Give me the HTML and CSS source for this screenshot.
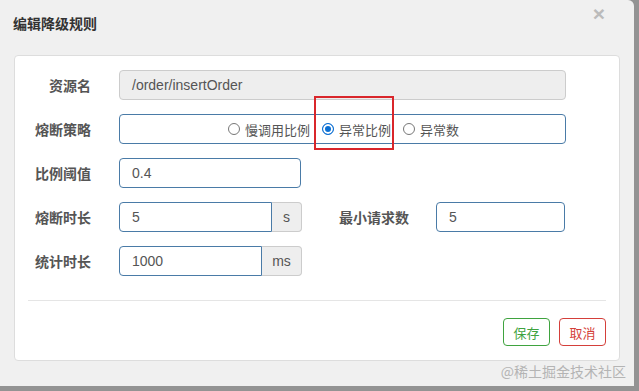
FILE: index.html
```html
<!DOCTYPE html>
<html>

<head>
    <meta charset="UTF-8">
    <meta name="viewport" content="width=device-width, initial-scale=1.0">
    <link rel="stylesheet" href="styles.css">
</head>

<body>
    <div class="modal">
        <div class="modal-header">
            <h4 class="modal-title">编辑降级规则</h4>
            <span class="close">&times;</span>
        </div>
        <div class="modal-body">
            <div class="form-row">
                <label class="label">资源名</label>
                <div class="input disabled wide">/order/insertOrder</div>
            </div>
            <div class="form-row">
                <label class="label">熔断策略</label>
                <div class="input wide radios">
                    <span class="option"><span class="radio"></span>慢调用比例</span>
                    <span class="option marked"><span class="radio checked"></span>异常比例</span>
                    <span class="option"><span class="radio"></span>异常数</span>
                </div>
            </div>
            <div class="form-row">
                <label class="label">比例阈值</label>
                <div class="input w182">0.4</div>
            </div>
            <div class="form-row">
                <label class="label">熔断时长</label>
                <div class="group">
                    <div class="input w153 left">5</div>
                    <span class="addon w30">s</span>
                </div>
                <label class="label label-b">最小请求数</label>
                <div class="input w129">5</div>
            </div>
            <div class="form-row">
                <label class="label">统计时长</label>
                <div class="group">
                    <div class="input w143 left">1000</div>
                    <span class="addon w40">ms</span>
                </div>
            </div>
            <div class="divider"></div>
            <div class="footer">
                <button class="btn btn-save">保存</button>
                <button class="btn btn-cancel">取消</button>
            </div>
        </div>
        <div class="watermark">@稀土掘金技术社区</div>
    </div>
</body>

</html>
```

FILE: styles.css
```css
body {
    margin: 0;
    background-color: #939393;
    font-family: "Liberation Sans", Arial, "Noto Sans CJK SC", sans-serif;
    color: #555;
}

.modal {
    width: 634px;
    height: 386px;
    background-color: #f0f0f0;
    border-top-right-radius: 6px;
    position: relative;
}

.modal-header {
    height: 55px;
    display: flex;
    align-items: flex-start;
    justify-content: space-between;
}

.modal-title {
    margin: 14px 0 0 13px;
    font-size: 14px;
    font-weight: bold;
    color: #333;
    line-height: 20px;
}

.close {
    margin: 2px 29px 0 0;
    font-size: 21px;
    font-weight: bold;
    color: #bbb;
    line-height: 24px;
}

.modal-body {
    box-sizing: border-box;
    margin-left: 14px;
    width: 606px;
    height: 306px;
    padding-top: 14px;
    background-color: #fff;
    border: 1px solid #ddd;
    border-radius: 4px;
}

.form-row {
    display: flex;
    align-items: center;
    height: 30px;
    margin-bottom: 14px;
}

.label {
    width: 76px;
    margin-right: 28px;
    text-align: right;
    font-size: 14px;
    font-weight: bold;
    color: #555;
}

.label-b {
    width: auto;
    margin-left: 37px;
    margin-right: 27px;
}

.input {
    box-sizing: border-box;
    height: 30px;
    padding: 0 12px;
    display: flex;
    align-items: center;
    font-size: 14px;
    color: #555;
    border: 1px solid #4a7ba7;
    border-radius: 4px;
    background-color: #fff;
}

.input.disabled {
    background-color: #eee;
    border-color: #ccc;
}

.wide { width: 447px; }
.w182 { width: 182px; }
.w153 { width: 153px; }
.w143 { width: 143px; }
.w129 { width: 129px; }

.group {
    display: flex;
}

.input.left {
    border-top-right-radius: 0;
    border-bottom-right-radius: 0;
}

.addon {
    box-sizing: border-box;
    height: 30px;
    display: flex;
    align-items: center;
    justify-content: center;
    font-size: 14px;
    color: #555;
    background-color: #eee;
    border: 1px solid #ccc;
    border-left: none;
    border-radius: 0 4px 4px 0;
}

.w30 { width: 30px; }
.w40 { width: 40px; }

.radios {
    justify-content: center;
    gap: 12px;
    padding-left: 14px;
}

.option {
    display: flex;
    align-items: center;
    font-size: 13px;
    color: #555;
    position: relative;
}

.radio {
    box-sizing: border-box;
    width: 12px;
    height: 12px;
    margin-right: 5px;
    border: 1px solid #777;
    border-radius: 50%;
}

.radio.checked {
    border-color: #0b6fd3;
    background-color: #0b6fd3;
    box-shadow: inset 0 0 0 2px #fff;
}

/* red annotation box */
.marked::after {
    content: "";
    position: absolute;
    left: -8px;
    top: -24px;
    width: 76px;
    height: 50px;
    border: 2px solid #d9262b;
}

.divider {
    margin: 24px 13px 0 13px;
    border-top: 1px solid #e5e5e5;
}

.footer {
    display: flex;
    justify-content: flex-end;
    gap: 9px;
    margin: 17px 13px 0 0;
}

.btn {
    width: 47px;
    height: 28px;
    padding: 0;
    font-family: inherit;
    font-size: 13px;
    background-color: #fff;
    border-radius: 4px;
}

.btn-save {
    color: #3fa33f;
    border: 1px solid #3fa33f;
}

.btn-cancel {
    color: #d43f3a;
    border: 1px solid #d43f3a;
}

.watermark {
    position: absolute;
    right: 8px;
    bottom: 5px;
    font-size: 14px;
    color: #b4b4b4;
    font-family: "Noto Sans CJK SC", sans-serif;
}
```
